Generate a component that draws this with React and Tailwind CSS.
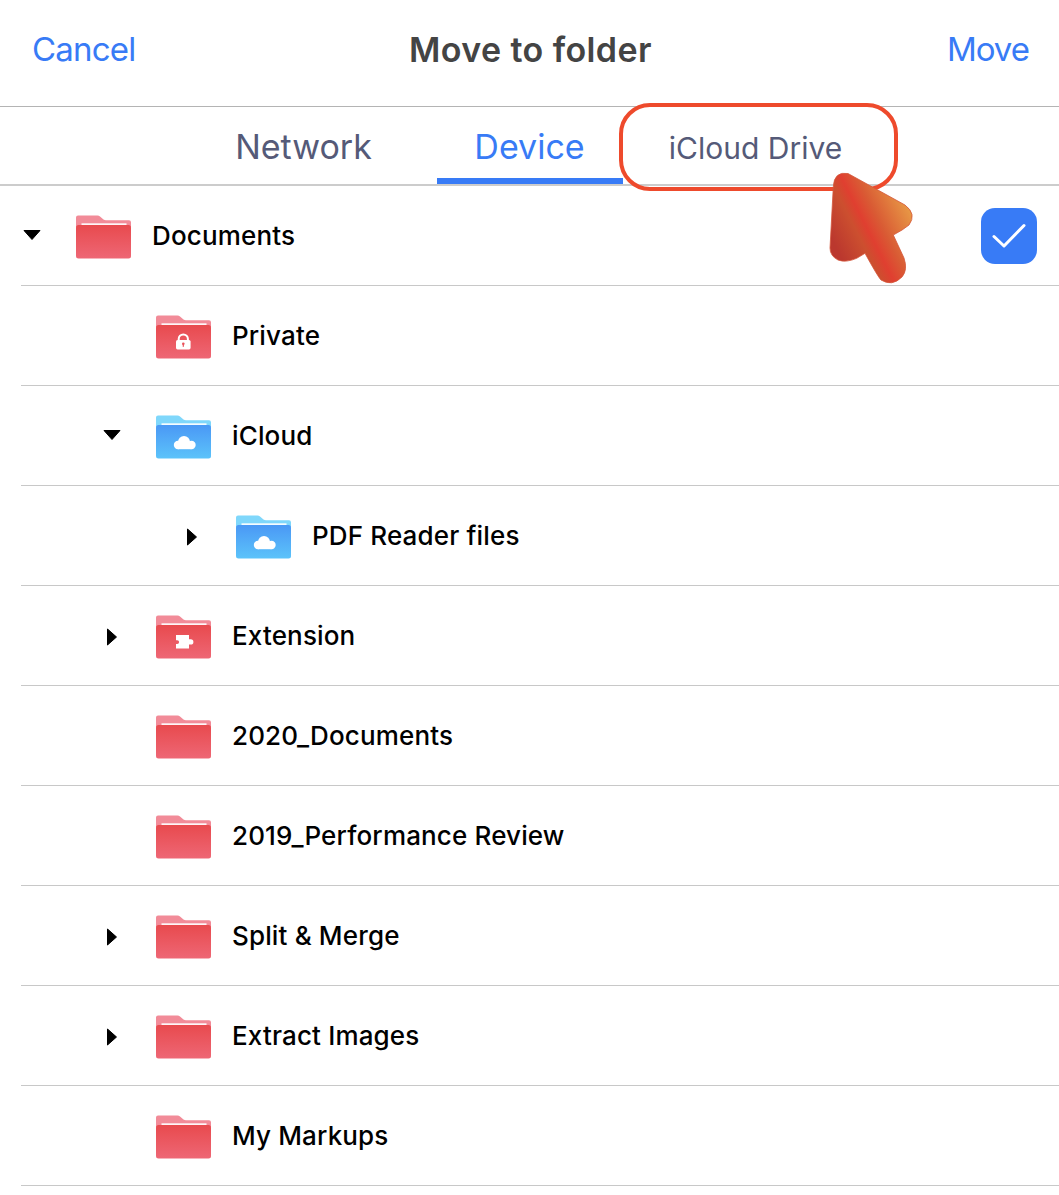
const ROWS = [
  { name: "Documents", pad: "pl-0", caret: "down", kind: "red", check: true },
  { name: "Private", pad: "pl-20", kind: "red", glyph: "lock" },
  { name: "iCloud", pad: "pl-20", caret: "down", kind: "blue", glyph: "cloud" },
  { name: "PDF Reader files", pad: "pl-40", caret: "right", kind: "blue", glyph: "cloud" },
  { name: "Extension", pad: "pl-20", caret: "right", kind: "red", glyph: "puzzle" },
  { name: "2020_Documents", pad: "pl-20", kind: "red" },
  { name: "2019_Performance Review", pad: "pl-20", kind: "red" },
  { name: "Split & Merge", pad: "pl-20", caret: "right", kind: "red" },
  { name: "Extract Images", pad: "pl-20", caret: "right", kind: "red" },
  { name: "My Markups", pad: "pl-20", kind: "red" },
];

function Folder({ kind, glyph }) {
  const blue = kind === "blue";
  const back = blue ? "#7fd7fb" : "#f28b98";
  const id = blue ? "folder-blue" : "folder-red";
  const top = blue ? "#4a98f5" : "#e84a4e";
  const bottom = blue ? "#5cc3fa" : "#ee6775";
  return (
    <svg width="55" height="44" viewBox="0 0 55 44" className="shrink-0">
      <defs>
        <linearGradient id={id} x1="0" y1="0" x2="0" y2="1">
          <stop offset="0" stopColor={top} />
          <stop offset="1" stopColor={bottom} />
        </linearGradient>
      </defs>
      <path d="M0 2.5A2 2 0 0 1 2 .5H21.5Q23 .5 24 1.5L27.5 4.5Q28.5 5.3 30 5.3H53A2 2 0 0 1 55 7.3V12H0Z" fill={back} />
      <rect x="0" y="10" width="55" height="33.5" rx="2.5" fill={`url(#${id})`} />
      <rect x="5.5" y="8.3" width="45" height="1.7" fill="#ffffff" fillOpacity="0.92" />
      {glyph === "lock" && (
        <g>
          <path d="M22.7 25.5V24a4.6 4.6 0 0 1 9.2 0V25.5" fill="none" stroke="#fff" strokeWidth="2" />
          <rect x="20" y="25" width="14.6" height="9.4" rx="1.6" fill="#fff" />
          <circle cx="27.3" cy="28.8" r="1.3" fill="#e9525a" />
          <rect x="26.7" y="29" width="1.2" height="2.8" fill="#e9525a" />
        </g>
      )}
      {glyph === "cloud" && (
        <g fill="#fff">
          <circle cx="22" cy="30" r="4.2" />
          <circle cx="28" cy="27" r="6" />
          <circle cx="35.5" cy="30" r="4.2" />
          <rect x="22" y="28" width="13.5" height="6.2" />
        </g>
      )}
      {glyph === "puzzle" && (
        <path d="M20 20H33V24.3H34.8a2.6 2.6 0 0 1 0 5.2H33V33.5H20V29H21.2a1.9 1.9 0 0 0 0-3.8H20Z" fill="#fff" />
      )}
    </svg>
  );
}

function Caret({ dir }) {
  return (
    <span className="w-[55px] h-[44px] -ml-[55px] shrink-0 flex items-center justify-start">
      {dir === "down" ? (
        <svg width="18" height="10" viewBox="0 0 18 10" className="ml-[2px] -mt-[4px]">
          <path d="M1 .5H17L9 9.5Z" fill="#000" stroke="#000" strokeWidth="1" strokeLinejoin="round" />
        </svg>
      ) : (
        <svg width="10" height="18" viewBox="0 0 10 18" className="ml-[6px]">
          <path d="M.5 1V17L9.5 9Z" fill="#000" stroke="#000" strokeWidth="1" strokeLinejoin="round" />
        </svg>
      )}
    </span>
  );
}

function Row({ row }) {
  return (
    <div className="ml-[21px] h-[100px] border-b border-[#c8c8c8] flex items-center pr-[22px]">
      <div className={`flex items-center flex-1 mt-[2px] ${row.pad}`}>
        <div className="ml-[55px] flex items-center">
          {row.caret ? <Caret dir={row.caret} /> : null}
          <Folder kind={row.kind} glyph={row.glyph} />
          <span className="ml-[21px] -mt-[2px] text-[26px] font-[550] tracking-[0.15px] text-black">{row.name}</span>
        </div>
      </div>
      {row.check && (
        <span className="w-[56px] h-[56px] rounded-[14px] bg-[#387bf6] flex items-center justify-center">
          <svg width="36" height="28" viewBox="0 0 36 28" fill="none">
            <path d="M3 14.5L13 24 33 3.5" stroke="#fff" strokeWidth="3" strokeLinecap="round" strokeLinejoin="round" />
          </svg>
        </span>
      )}
    </div>
  );
}

export default function App() {
  return (
    <div className="relative w-[1059px] h-[1195px] bg-white overflow-hidden font-['Inter',sans-serif]">
      <header className="h-[107px] border-b border-[#b4b4b4] grid grid-cols-3 items-center pl-[32px] pr-[30px] pb-[7px] text-[33px] text-[#387bf6]">
        <span className="tracking-[-0.8px]">Cancel</span>
        <span className="font-semibold text-[#444444] text-center text-[34px] tracking-[0.4px] whitespace-nowrap">Move to folder</span>
        <span className="text-right tracking-[-1px]">Move</span>
      </header>
      <nav className="h-[79px] border-b-2 border-[#cccccc] flex justify-center text-[34px] text-[#555a78]">
        <span className="w-[266px] flex items-center justify-center pt-[2px]">Network</span>
        <span className="w-[186px] flex items-center justify-center pt-[8px] text-[#387bf6] border-b-[6px] border-[#387bf6]">Device</span>
        <span className="w-[266px] flex items-center justify-center pt-[5px] text-[30px]">iCloud Drive</span>
      </nav>
      <main>
        {ROWS.map((r) => (
          <Row key={r.name} row={r} />
        ))}
      </main>
      <div className="absolute left-[619px] top-[103px] w-[279px] h-[88px] rounded-[31px] border-4 border-[#ee4a2c]" />
      <svg className="absolute left-[825px] top-[165px]" width="95" height="122" viewBox="825 165 95 122">
        <defs>
          <linearGradient id="arrow" gradientUnits="userSpaceOnUse" x1="835" y1="245" x2="910" y2="207">
            <stop offset="0" stopColor="#bb382e" />
            <stop offset="0.3" stopColor="#cc4f2f" />
            <stop offset="0.43" stopColor="#e03f30" />
            <stop offset="0.6" stopColor="#d95b34" />
            <stop offset="1" stopColor="#e89a46" />
          </linearGradient>
        </defs>
        <path
          d="M833.3 186.7Q834 171 848 173.5L905 205Q917 214 909 225Q903 230 893.3 235L904 258Q908 270 902 277Q892 287 881 280Q878 277 865 253.3L856.7 258.3Q846 263 838 260Q830 256 830 248Z"
          fill="url(#arrow)"
          stroke="#d4553a"
          strokeWidth="0.8"
        />
      </svg>
    </div>
  );
}
